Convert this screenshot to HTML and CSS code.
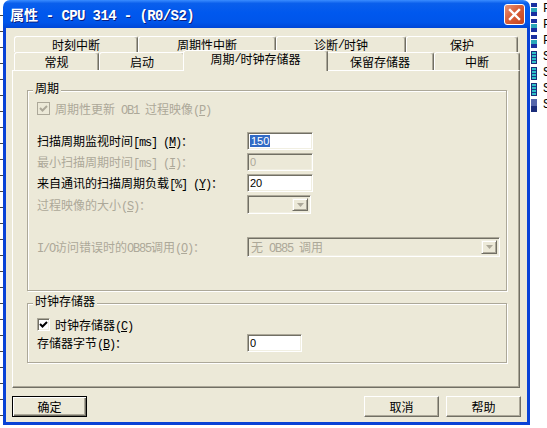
FILE: index.html
```html
<!DOCTYPE html>
<html lang="zh">
<head>
  <meta charset="UTF-8">
  <title>属性 - CPU 314 - (R0/S2)</title>
  <link rel="stylesheet" href="styles.css">
</head>
<body>
  <div class="desk">
    <div class="left-strip"></div>

    <div class="window">
      <div class="titlebar">
        <span class="title">属性<span class="en"> - CPU 314 - (R0/S2)</span></span>
        <span class="close">
          <svg width="13" height="13" viewBox="0 0 13 13">
            <path d="M2 2 L11 11 M11 2 L2 11" stroke="#fff" stroke-width="2.4" stroke-linecap="square"/>
          </svg>
        </span>
      </div>

      <div class="frame">
        <div class="tabs">
          <div class="tab-row back">
            <div class="tab t-time">时刻中断</div>
            <div class="tab t-cyclic">周期性中断</div>
            <div class="tab t-diag">诊断<span class="en">/</span>时钟</div>
            <div class="tab t-protect">保护</div>
          </div>
          <div class="tab-row front">
            <div class="tab t-general">常规</div>
            <div class="tab t-startup">启动</div>
            <div class="tab t-cycle active">周期<span class="en">/</span>时钟存储器</div>
            <div class="tab t-retain">保留存储器</div>
            <div class="tab t-irq">中断</div>
          </div>
        </div>

        <div class="panel">
          <div class="group group-cycle">
            <div class="group-title">周期</div>
            <div class="check disabled">
              <span class="box">
                <svg width="9" height="9" viewBox="0 0 9 9"><path d="M1 4 L3.5 6.5 L8 2" fill="none" stroke="#ACA899" stroke-width="2"/></svg>
              </span>
              <span>周期性更新<span class="en"> OB1 </span>过程映像<span class="en">(<u>P</u>)</span></span>
            </div>

            <div class="fields">
              <span class="label">扫描周期监视时间<span class="en">[ms] (<u>M</u>)</span>：</span>
              <div class="edit"><span class="sel">150</span></div>

              <span class="label disabled">最小扫描周期时间<span class="en">[ms] (<u>I</u>)</span>：</span>
              <div class="edit off">0</div>

              <span class="label">来自通讯的扫描周期负载<span class="en">[%] (<u>Y</u>)</span>：</span>
              <div class="edit">20</div>

              <span class="label disabled">过程映像的大小<span class="en">(<u>S</u>)</span>：</span>
              <div class="combo small">
                <span class="combo-text"></span>
                <span class="drop"><svg width="7" height="4" viewBox="0 0 7 4"><path d="M0 0 H7 L3.5 4 Z" fill="#ACA899"/></svg></span>
              </div>

              <span class="label disabled wide-gap"><span class="en">I/O</span>访问错误时的<span class="en">OB85</span>调用<span class="en">(<u>O</u>)</span>：</span>
              <div class="combo large wide-gap">
                <span class="combo-text">无<span class="en"> OB85 </span>调用</span>
                <span class="drop"><svg width="7" height="4" viewBox="0 0 7 4"><path d="M0 0 H7 L3.5 4 Z" fill="#ACA899"/></svg></span>
              </div>
            </div>
          </div>

          <div class="group group-clock">
            <div class="group-title">时钟存储器</div>
            <div class="check">
              <span class="box">
                <svg width="9" height="9" viewBox="0 0 9 9"><path d="M1 4 L3.5 6.5 L8 2" fill="none" stroke="#000" stroke-width="2"/></svg>
              </span>
              <span>时钟存储器<span class="en">(<u>C</u>)</span></span>
            </div>
            <div class="fields">
              <span class="label">存储器字节<span class="en">(<u>B</u>)</span>：</span>
              <div class="edit byte">0</div>
            </div>
          </div>
        </div>

        <div class="buttons">
          <button class="btn default">确定</button>
          <span class="spacer"></span>
          <button class="btn">取消</button>
          <button class="btn">帮助</button>
        </div>
      </div>
    </div>

    <div class="right-strip">
      <div class="item"><span class="icon net"></span>F</div>
      <div class="item"><span class="icon net"></span>F</div>
      <div class="item"><span class="icon net"></span>F</div>
      <div class="item"><span class="icon mod"></span>S</div>
      <div class="item"><span class="icon mod"></span>S</div>
      <div class="item"><span class="icon mod"></span>S</div>
      <div class="item"><span class="icon dev"></span>S</div>
    </div>
  </div>
</body>
</html>
```

FILE: styles.css
```css
* {
  box-sizing: border-box;
}

body {
  margin: 0;
  width: 547px;
  height: 428px;
  overflow: hidden;
  background-color: #fff;
  font-family: "Liberation Mono", "Noto Sans CJK SC", monospace;
  font-size: 12px;
  color: #000;
}

/* latin runs are narrow in the dialog font */
.en {
  letter-spacing: -1.2px;
}

.desk {
  display: flex;
  height: 428px;
}

.left-strip {
  width: 3px;
  background: repeating-linear-gradient(to bottom, #fff 0 15px, #444 15px 16px);
}

/* window frame */
.window {
  width: 527px;
  height: 425px;
  display: flex;
  flex-direction: column;
}

.titlebar {
  height: 28px;
  display: flex;
  align-items: center;
  justify-content: space-between;
  padding: 0 5px 0 7px;
  border-radius: 7px 7px 0 0;
  background: linear-gradient(to bottom, #3a8cff 0%, #0a5fec 12%, #0058ee 45%, #0055ea 80%, #0046d6 100%);
}

.title {
  color: #fff;
  font-weight: bold;
  font-size: 14px;
  text-shadow: 1px 1px #0a1e80;
}

.title .en {
  letter-spacing: -0.6px;
}

.close {
  width: 21px;
  height: 21px;
  border: 1px solid #fff;
  border-radius: 3px;
  background: linear-gradient(135deg, #e9957a 0%, #d9603a 45%, #c4431d 100%);
  display: flex;
  align-items: center;
  justify-content: center;
}

.frame {
  flex: 1;
  display: flex;
  flex-direction: column;
  background-color: #ECE9D8;
  border: 3px solid #0842d6;
  border-top: none;
  padding: 8px 6px 5px 6px;
}

/* tabs */
.tabs {
  margin-left: 2px;
  height: 34px;
  display: flex;
  flex-direction: column;
  position: relative;
  z-index: 1;
}

.tab-row {
  display: flex;
}

.tab-row.back {
  height: 16px;
}

.tab-row.front {
  height: 18px;
}

.tab {
  background-color: #ECE9D8;
  border-top: 1px solid #fff;
  border-left: 1px solid #fff;
  border-right: 1px solid #716F64;
  box-shadow: inset -1px 0 #ACA899;
  border-radius: 3px 3px 0 0;
  display: flex;
  align-items: center;
  justify-content: center;
  white-space: nowrap;
  padding-top: 1px;
}

.t-time { width: 124px; }
.t-cyclic { width: 138px; }
.t-diag { width: 130px; }
.t-protect { width: 112px; }

.t-general { width: 85px; }
.t-startup { width: 86px; }
.t-cycle { width: 145px; }
.t-retain { width: 108px; }
.t-irq { width: 86px; }

.tab.active {
  margin: -2px -2px 0 -2px;
  height: 21px;
  position: relative;
  z-index: 2;
  padding: 0 0 4px;
}

/* tab page */
.panel {
  height: 318px;
  margin-right: 1px;
  border: 1px solid;
  border-color: #fff #716F64 #716F64 #fff;
  box-shadow: inset -1px -1px #ACA899;
  padding: 19px 0 0 14px;
}

.group {
  width: 480px;
  border: 1px solid #ACA899;
  box-shadow: inset 1px 1px #fff, 1px 1px #fff;
  padding: 0 0 0 9px;
}

.group-cycle {
  padding-bottom: 33px;
}

.group-clock {
  margin-top: 12px;
  padding-bottom: 10px;
}

.group-title {
  width: fit-content;
  margin: -7px 0 0 -4px;
  padding: 0 2px;
  line-height: 13px;
  background-color: #ECE9D8;
}

.check {
  display: flex;
  align-items: center;
  height: 13px;
  margin-top: 5px;
  gap: 5px;
}

.group-clock .check {
  margin-top: 8px;
}

.check .box {
  width: 13px;
  height: 13px;
  background-color: #fff;
  border: 1px solid;
  border-color: #ACA899 #fff #fff #ACA899;
  box-shadow: inset 1px 1px #716F64, inset -1px -1px #F1EFE2;
  display: flex;
  align-items: center;
  justify-content: center;
}

.check.disabled {
  color: #ACA899;
}

.check.disabled .box {
  background-color: #ECE9D8;
  border-color: #ACA899;
  box-shadow: none;
}

.fields {
  display: grid;
  grid-template-columns: 210px auto;
  row-gap: 3px;
  align-items: center;
  justify-items: start;
  margin-top: 17px;
}

.group-clock .fields {
  margin-top: 3px;
}

.label {
  white-space: nowrap;
}

.label.disabled {
  color: #ACA899;
}

.wide-gap {
  margin-top: 20px;
}

.edit {
  width: 66px;
  height: 18px;
  background-color: #fff;
  border: 1px solid;
  border-color: #ACA899 #fff #fff #ACA899;
  box-shadow: inset 1px 1px #716F64, inset -1px -1px #F1EFE2;
  font-family: "Liberation Sans", Arial, sans-serif;
  font-size: 11px;
  line-height: 13px;
  padding: 2px 0 0 2px;
}

.edit.off {
  background-color: #ECE9D8;
  color: #ACA899;
}

.edit.byte {
  width: 55px;
}

.sel {
  background-color: #316AC5;
  color: #fff;
  padding: 0 1px;
}

.combo {
  height: 19px;
  background-color: #ECE9D8;
  border: 1px solid;
  border-color: #ACA899 #fff #fff #ACA899;
  box-shadow: inset 1px 1px #716F64, inset -1px -1px #F1EFE2;
  display: flex;
  align-items: center;
  padding: 2px;
  color: #ACA899;
}

.combo.small {
  width: 64px;
}

.combo.large {
  width: 253px;
  height: 20px;
}

.combo-text {
  flex: 1;
  padding-left: 1px;
}

.drop {
  width: 16px;
  height: 100%;
  border: 1px solid;
  border-color: #F1EFE2 #716F64 #716F64 #F1EFE2;
  box-shadow: inset 1px 1px #fff, inset -1px -1px #ACA899;
  display: flex;
  align-items: center;
  justify-content: center;
}

/* dialog buttons */
.buttons {
  display: flex;
  gap: 7px;
  margin-top: 8px;
}

.spacer {
  flex: 1;
}

.btn {
  width: 75px;
  height: 21px;
  padding: 0;
  font-family: inherit;
  font-size: 12px;
  color: #000;
  background-color: #ECE9D8;
  border: 1px solid;
  border-color: #fff #716F64 #716F64 #fff;
  box-shadow: inset -1px -1px #ACA899;
}

.btn.default {
  border-color: #000;
  box-shadow: inset 1px 1px #fff, inset -1px -1px #716F64, inset -2px -2px #ACA899;
}

/* tree behind the dialog */
.right-strip {
  flex: 1;
  padding-top: 1px;
  overflow: hidden;
}

.item {
  height: 16px;
  display: flex;
  align-items: center;
  gap: 6px;
  padding-left: 1px;
  white-space: nowrap;
}

.icon {
  width: 6px;
  height: 13px;
  flex: none;
}

.icon.net {
  background: linear-gradient(to bottom, #1a2fa0 0 4px, #fff 4px 5px, #2aa7b8 5px 9px, #1a2fa0 9px 13px);
}

.icon.mod {
  background: repeating-linear-gradient(to bottom, #2ec0c8 0 2px, #1b3a8c 2px 3px);
  border: 1px solid #1b2d7a;
}

.icon.dev {
  background: linear-gradient(to bottom, #5566aa 0 7px, #1b2d7a 7px 13px);
}
```
